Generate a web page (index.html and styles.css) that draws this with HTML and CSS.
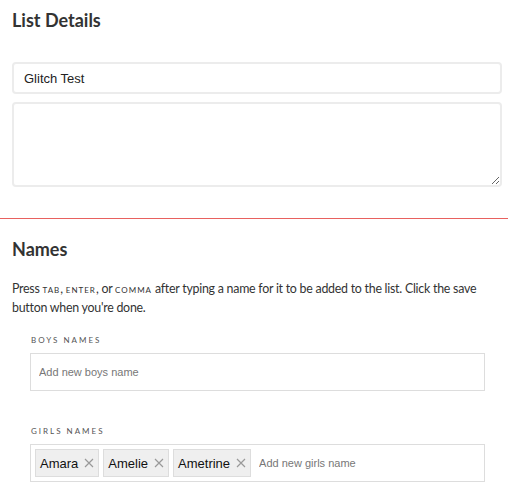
FILE: index.html
```html
<!DOCTYPE html>
<html lang="en">
<head>
  <meta charset="UTF-8">
  <meta name="viewport" content="width=device-width, initial-scale=1.0">
  <title>Edit List</title>
  <link rel="stylesheet" href="styles.css">
</head>
<body>
  <section class="panel">
    <h2>List Details</h2>
    <input class="field" type="text" value="Glitch Test">
    <textarea class="field area"></textarea>
  </section>

  <div class="divider"></div>

  <section class="panel names">
    <h2>Names</h2>
    <p class="hint">Press <span class="key">tab</span>, <span class="key">enter</span>, or <span class="key">comma</span> after typing a name for it to be added to the list. Click the save button when you're done.</p>

    <div class="group">
      <label class="label">Boys names</label>
      <div class="tags">
        <input class="tag-input" type="text" placeholder="Add new boys name">
      </div>
    </div>

    <div class="group">
      <label class="label">Girls names</label>
      <div class="tags">
        <span class="tag">Amara<svg class="x" viewBox="0 0 10 10"><path d="M1 1L9 9M9 1L1 9"/></svg></span>
        <span class="tag">Amelie<svg class="x" viewBox="0 0 10 10"><path d="M1 1L9 9M9 1L1 9"/></svg></span>
        <span class="tag">Ametrine<svg class="x" viewBox="0 0 10 10"><path d="M1 1L9 9M9 1L1 9"/></svg></span>
        <input class="tag-input" type="text" placeholder="Add new girls name">
      </div>
    </div>
  </section>
</body>
</html>
```

FILE: styles.css
```css
body {
  font-family: 'Lato', 'Liberation Sans', sans-serif;
  color: #333;
  background: #fff;
  margin: 0;
}
.panel {
  padding: 0 6px 0 12px;
}
h2 {
  font-size: 18px;
  font-weight: 700;
  color: #333;
  margin: 0;
  padding-top: 9px;
  line-height: 22px;
}
.field {
  display: block;
  box-sizing: border-box;
  width: 100%;
  border: 2px solid #ececec;
  border-radius: 4px;
  font-family: 'Liberation Sans', sans-serif;
  font-size: 13px;
  color: #222;
  padding: 0 10px;
  margin-top: 31px;
  height: 32px;
  outline: none;
}
.area {
  margin-top: 8px;
  height: 85px;
  resize: vertical;
}
.divider {
  border-top: 1px solid #e8615f;
  margin-top: 31px;
}
.names h2 {
  padding-top: 19px;
}
.hint {
  font-size: 12.4px;
  line-height: 19px;
  letter-spacing: -0.25px;
  color: #333;
  margin: 19px 0 0;
}
.key {
  text-transform: uppercase;
  font-size: 8px;
  line-height: 1;
  letter-spacing: 1px;
}
.group {
  padding: 0 17px 0 18px;
  margin-top: 18px;
}
.group + .group {
  margin-top: 35px;
}
.label {
  display: block;
  font-size: 8px;
  letter-spacing: 2px;
  text-transform: uppercase;
  color: #555;
  margin-bottom: 8px;
  padding-left: 1px;
}
.tags {
  display: flex;
  align-items: center;
  gap: 4px;
  height: 38px;
  box-sizing: border-box;
  border: 1px solid #ddd;
  padding: 0 4px;
}
.tag {
  display: inline-flex;
  align-items: center;
  height: 28px;
  box-sizing: border-box;
  padding: 0 4px;
  background: #efefef;
  border: 1px solid #ddd;
  font-family: 'Liberation Sans', sans-serif;
  font-size: 13px;
  color: #111;
  white-space: nowrap;
}
.x {
  width: 10px;
  height: 10px;
  margin-left: 6px;
  stroke: #999;
  stroke-width: 1.2;
  fill: none;
}
.tag-input {
  flex: 1;
  border: 0;
  outline: none;
  font-family: 'Liberation Sans', sans-serif;
  font-size: 11px;
  padding: 0 4px;
}
.tag-input::placeholder {
  color: #777;
}
```
